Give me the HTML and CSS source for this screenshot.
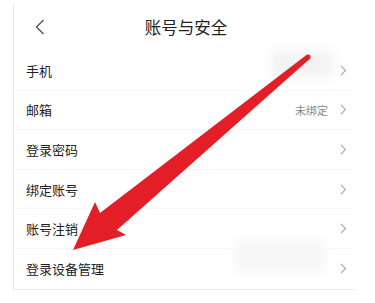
FILE: index.html
```html
<!DOCTYPE html>
<html lang="zh">
<head>
<meta charset="utf-8">
<link rel="stylesheet" href="styles.css">
</head>
<body>
<div class="page">
  <div class="panel">
    <div class="header">
      <svg class="back" width="10" height="16" viewBox="0 0 10 16"><path d="M8.5 1 L1.5 8 L8.5 15" fill="none" stroke="#555" stroke-width="1.4"/></svg>
      <div class="title">账号与安全</div>
    </div>
    <div class="row"><span class="label">手机</span><span class="right"><span class="blur-phone"></span><svg class="chev" width="7" height="11" viewBox="0 0 7 11"><path d="M1 1 L5.5 5.5 L1 10" fill="none" stroke="#aaa" stroke-width="1.1"/></svg></span></div>
    <div class="row"><span class="label">邮箱</span><span class="right"><span class="value">未绑定</span><svg class="chev" width="7" height="11" viewBox="0 0 7 11"><path d="M1 1 L5.5 5.5 L1 10" fill="none" stroke="#aaa" stroke-width="1.1"/></svg></span></div>
    <div class="row"><span class="label">登录密码</span><span class="right"><svg class="chev" width="7" height="11" viewBox="0 0 7 11"><path d="M1 1 L5.5 5.5 L1 10" fill="none" stroke="#aaa" stroke-width="1.1"/></svg></span></div>
    <div class="row"><span class="label">绑定账号</span><span class="right"><svg class="chev" width="7" height="11" viewBox="0 0 7 11"><path d="M1 1 L5.5 5.5 L1 10" fill="none" stroke="#aaa" stroke-width="1.1"/></svg></span></div>
    <div class="row"><span class="label">账号注销</span><span class="right"><svg class="chev" width="7" height="11" viewBox="0 0 7 11"><path d="M1 1 L5.5 5.5 L1 10" fill="none" stroke="#aaa" stroke-width="1.1"/></svg></span></div>
    <div class="row last"><span class="label">登录设备管理</span><span class="right"><span class="blur-device"></span><svg class="chev" width="7" height="11" viewBox="0 0 7 11"><path d="M1 1 L5.5 5.5 L1 10" fill="none" stroke="#aaa" stroke-width="1.1"/></svg></span></div>
  </div>
  <svg class="arrow" width="375" height="303" viewBox="0 0 375 303">
    <polygon points="306.4,55.1 309.6,58.9 117,230 126,235 73,250 95,202 100,213" fill="#e41e26"/>
    <circle cx="308" cy="57" r="2.5" fill="#e41e26"/>
  </svg>
</div>
</body>
</html>
```

FILE: styles.css
```css
html, body {
  margin: 0;
  padding: 0;
  background: #fff;
}
.page {
  position: relative;
  width: 375px;
  height: 303px;
  overflow: hidden;
  font-family: "Noto Sans CJK SC", "Noto Sans", sans-serif;
  color: #222;
}
.panel {
  margin-left: 13px;
  margin-top: 4px;
  width: 342px;
  border-left: 1px solid #e6e6e6;
  border-bottom: 1px solid #ececec;
}
.header {
  height: 47px;
  display: flex;
  align-items: center;
  justify-content: center;
  position: relative;
}
.back {
  position: absolute;
  left: 21px;
  top: 15px;
}
.title {
  font-size: 16.5px;
  line-height: 1;
  margin-left: 2px;
}
.row {
  height: 39.6px;
  box-sizing: border-box;
  display: flex;
  align-items: center;
  justify-content: space-between;
  padding: 0 9px 0 12px;
  border-bottom: 1px solid #f8f8f8;
}
.row.last {
  border-bottom: none;
}
.label {
  font-size: 13px;
  line-height: 1;
}
.right {
  display: flex;
  align-items: center;
  position: relative;
}
.value {
  font-size: 11px;
  color: #888;
  margin-right: 12px;
}
.chev {
  display: block;
}
.blur-phone {
  position: absolute;
  right: 14px;
  top: -14px;
  width: 62px;
  height: 26px;
  background: #f2f2f2;
  filter: blur(6px);
}
.blur-device {
  position: absolute;
  right: 22px;
  top: -24px;
  width: 90px;
  height: 34px;
  background: #f7f7f7;
  filter: blur(4px);
}
.arrow {
  position: absolute;
  left: 0;
  top: 0;
}
```
